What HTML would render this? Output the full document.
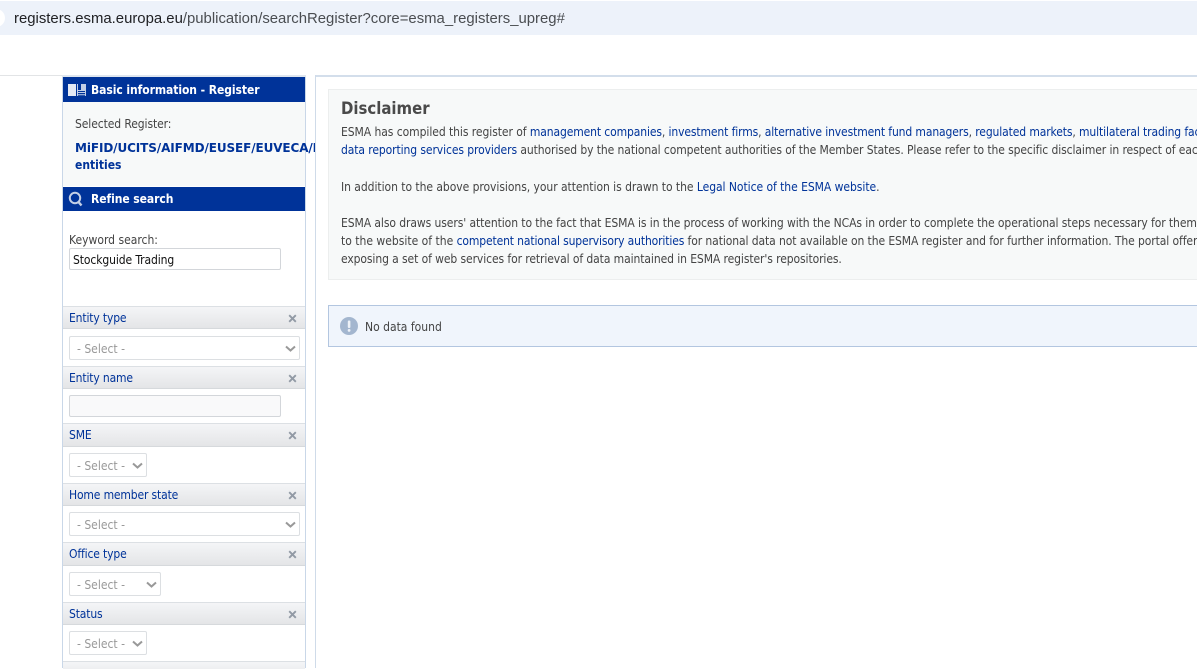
<!DOCTYPE html>
<html><head><meta charset="utf-8">
<style>
html,body{margin:0;padding:0;background:#fff;}
body{width:1197px;height:668px;position:relative;overflow:hidden;font-family:"DejaVu Sans Condensed","DejaVu Sans","Liberation Sans",sans-serif;font-size:12px;color:#444;}
.a{position:absolute;}
.t{position:absolute;white-space:nowrap;line-height:16px;height:16px;}
.d{letter-spacing:-0.095px;}
a,.l{color:#003399;text-decoration:none;}
.fh{position:absolute;left:63px;width:242px;box-sizing:border-box;border-top:1px solid #dce0e4;border-bottom:1px solid #d6d9dc;background:linear-gradient(#f4f5f7,#e4e5e7);}
.fh span{position:absolute;left:6px;top:3px;color:#003399;line-height:16px;white-space:nowrap;letter-spacing:-0.15px;}
.fh svg{position:absolute;left:225px;top:7px;}
.sel{position:absolute;left:69px;height:24px;box-sizing:border-box;border:1px solid #dcdfe2;border-radius:2px;background:#fff;color:#999;line-height:24px;padding-left:7px;}
.sel svg{position:absolute;right:3px;top:8px;}
.inp{position:absolute;left:69px;width:212px;height:22px;box-sizing:border-box;border:1px solid #d3d6da;border-radius:2px;background:#fff;color:#111;line-height:22px;padding-left:3px;letter-spacing:-0.1px;}
</style></head>
<body>
<!-- address bar -->
<div class="a" style="left:0;top:1px;width:1197px;height:34px;background:#edf2fa;"></div>
<div class="a" style="left:-13px;top:9px;width:18px;height:18px;border-radius:50%;background:#fff;"></div>
<div class="t" style="left:14px;top:10px;font-family:'Liberation Sans',sans-serif;font-size:14.9px;line-height:18px;height:18px;color:#202124;">registers.esma.europa.eu<span style="color:#4a4d51;">/publication/searchRegister?core=esma_registers_upreg#</span></div>

<!-- lines -->
<div class="a" style="left:0;top:75px;width:62px;height:1px;background:#e2e4e6;"></div>
<div class="a" style="left:62px;top:75px;width:244px;height:2px;background:#dfe6ef;"></div>
<div class="a" style="left:315px;top:75px;width:882px;height:2px;background:#d3deeb;"></div>
<div class="a" style="left:315px;top:75px;width:1px;height:593px;background:#cfdbe9;"></div>

<!-- sidebar -->
<div class="a" style="left:62px;top:77px;width:1px;height:591px;background:#c9d7e8;"></div>
<div class="a" style="left:305px;top:77px;width:1px;height:591px;background:#c9d7e8;"></div>
<div class="a" style="left:63px;top:102px;width:242px;height:84px;background:#f7f9f9;"></div>

<div class="a" style="left:63px;top:77px;width:242px;height:25px;background:#003399;"></div>
<svg class="a" style="left:68px;top:84px;" width="18" height="12" viewBox="0 0 18 12"><rect x="0" y="0" width="8" height="12" fill="#e4e9f4"/><rect x="9" y="0" width="9" height="12" fill="#c3cfe6"/><rect x="10" y="0" width="3" height="6" fill="#003399"/><path d="M10 7.5h7M10 9.5h7M10 11.2h7" stroke="#003399" stroke-width="1"/></svg>
<div class="t" style="left:91px;top:82px;color:#fff;font-weight:bold;font-size:12px;letter-spacing:-0.07px;">Basic information - Register</div>

<div class="t d" style="left:75px;top:116px;">Selected Register:</div>
<div class="a" style="left:75px;top:140px;width:240px;height:34px;overflow:hidden;"><div class="l" style="font-weight:bold;line-height:17px;white-space:nowrap;"><span style="font-family:'DejaVu Sans',sans-serif;letter-spacing:-0.1px;">MiFID/UCITS/AIFMD/EUSEF/EUVECA/Investment</span><br>entities</div></div>

<div class="a" style="left:63px;top:187px;width:242px;height:24px;background:#003399;"></div>
<svg class="a" style="left:68px;top:191px;" width="16" height="16" viewBox="0 0 16 16"><circle cx="7" cy="7" r="5.2" fill="none" stroke="#c3cfe6" stroke-width="2"/><path d="M10.5 11l3 3.5" stroke="#c3cfe6" stroke-width="2.4"/></svg>
<div class="t" style="left:91px;top:191px;color:#fff;font-weight:bold;letter-spacing:-0.07px;">Refine search</div>

<div class="t" style="left:69px;top:232px;">Keyword search:</div>
<div class="inp" style="top:248px;">Stockguide Trading</div>

<div class="fh" style="top:306px;height:23px;"><span>Entity type</span><svg width="9" height="9" viewBox="0 0 9 9"><path d="M1.2 1.2l6.6 6.6M7.8 1.2l-6.6 6.6" stroke="#929aa5" stroke-width="1.9"/></svg></div>
<div class="sel" style="top:336px;width:231px;">- Select -<svg width="11" height="8" viewBox="0 0 11 8"><path d="M1 1.5l4.5 4 4.5-4" fill="none" stroke="#999" stroke-width="2"/></svg></div>

<div class="fh" style="top:366px;height:23px;"><span>Entity name</span><svg width="9" height="9" viewBox="0 0 9 9"><path d="M1.2 1.2l6.6 6.6M7.8 1.2l-6.6 6.6" stroke="#929aa5" stroke-width="1.9"/></svg></div>
<div class="inp" style="top:395px;background:#f9f9fa;"></div>

<div class="fh" style="top:423px;height:24px;"><span>SME</span><svg width="9" height="9" viewBox="0 0 9 9"><path d="M1.2 1.2l6.6 6.6M7.8 1.2l-6.6 6.6" stroke="#929aa5" stroke-width="1.9"/></svg></div>
<div class="sel" style="top:453px;width:78px;">- Select -<svg width="11" height="8" viewBox="0 0 11 8"><path d="M1 1.5l4.5 4 4.5-4" fill="none" stroke="#999" stroke-width="2"/></svg></div>

<div class="fh" style="top:483px;height:23px;"><span>Home member state</span><svg width="9" height="9" viewBox="0 0 9 9"><path d="M1.2 1.2l6.6 6.6M7.8 1.2l-6.6 6.6" stroke="#929aa5" stroke-width="1.9"/></svg></div>
<div class="sel" style="top:512px;width:231px;">- Select -<svg width="11" height="8" viewBox="0 0 11 8"><path d="M1 1.5l4.5 4 4.5-4" fill="none" stroke="#999" stroke-width="2"/></svg></div>

<div class="fh" style="top:542px;height:24px;"><span>Office type</span><svg width="9" height="9" viewBox="0 0 9 9"><path d="M1.2 1.2l6.6 6.6M7.8 1.2l-6.6 6.6" stroke="#929aa5" stroke-width="1.9"/></svg></div>
<div class="sel" style="top:572px;width:92px;">- Select -<svg width="11" height="8" viewBox="0 0 11 8"><path d="M1 1.5l4.5 4 4.5-4" fill="none" stroke="#999" stroke-width="2"/></svg></div>

<div class="fh" style="top:602px;height:23px;"><span>Status</span><svg width="9" height="9" viewBox="0 0 9 9"><path d="M1.2 1.2l6.6 6.6M7.8 1.2l-6.6 6.6" stroke="#929aa5" stroke-width="1.9"/></svg></div>
<div class="sel" style="top:631px;width:78px;">- Select -<svg width="11" height="8" viewBox="0 0 11 8"><path d="M1 1.5l4.5 4 4.5-4" fill="none" stroke="#999" stroke-width="2"/></svg></div>

<div class="a" style="left:63px;top:661px;width:242px;height:7px;background:linear-gradient(#f4f5f7,#eeeff1);border-top:1px solid #dce0e4;"></div>

<!-- disclaimer -->
<div class="a" style="left:328px;top:89px;width:869px;height:191px;box-sizing:border-box;background:#f7f9f9;border:1px solid #eceeee;border-right:0;"></div>
<div class="t" style="left:341px;top:100px;font-weight:bold;font-size:16.6px;line-height:18px;height:18px;color:#4a4a4a;">Disclaimer</div>
<div class="t" style="left:341px;top:124px;letter-spacing:-0.065px;">ESMA has compiled this register of <span style="letter-spacing:-0.12px;"><a>management companies</a>, <a>investment firms</a>, <a>alternative investment fund managers</a>, <a>regulated markets</a>, <a>multilateral trading facilities</a></span></div>
<div class="t d" style="left:341px;top:142px;"><a>data reporting services providers</a> authorised by the national competent authorities of the Member States. Please refer to the specific disclaimer in respect of each</div>
<div class="t" style="left:341px;top:179px;letter-spacing:-0.05px;">In addition to the above provisions, your attention is drawn to the <a>Legal Notice of the ESMA website</a>.</div>
<div class="t" style="left:341px;top:215px;letter-spacing:-0.085px;">ESMA also draws users' attention to the fact that ESMA is in the process of working with the NCAs in order to complete the operational steps necessary for them</div>
<div class="t d" style="left:341px;top:233px;"><span style="letter-spacing:0;">to the website of the </span><a style="letter-spacing:-0.14px;">competent national supervisory authorities</a> for national data not available on the ESMA register and for further information. The portal offers</div>
<div class="t d" style="left:341px;top:251px;">exposing a set of web services for retrieval of data maintained in ESMA register's repositories.</div>

<!-- alert -->
<div class="a" style="left:328px;top:305px;width:869px;height:42px;box-sizing:border-box;background:#f0f5fc;border:1px solid #b3c6e0;border-right:0;"></div>
<svg class="a" style="left:340px;top:317px;" width="18" height="18" viewBox="0 0 18 18"><circle cx="9" cy="9" r="9" fill="#a3b6cf"/><rect x="7.8" y="3.5" width="2.6" height="7.5" rx="1" fill="#eef2f8"/><circle cx="9.1" cy="13.4" r="1.4" fill="#eef2f8"/></svg>
<div class="t" style="left:365px;top:319px;">No data found</div>
</body></html>
